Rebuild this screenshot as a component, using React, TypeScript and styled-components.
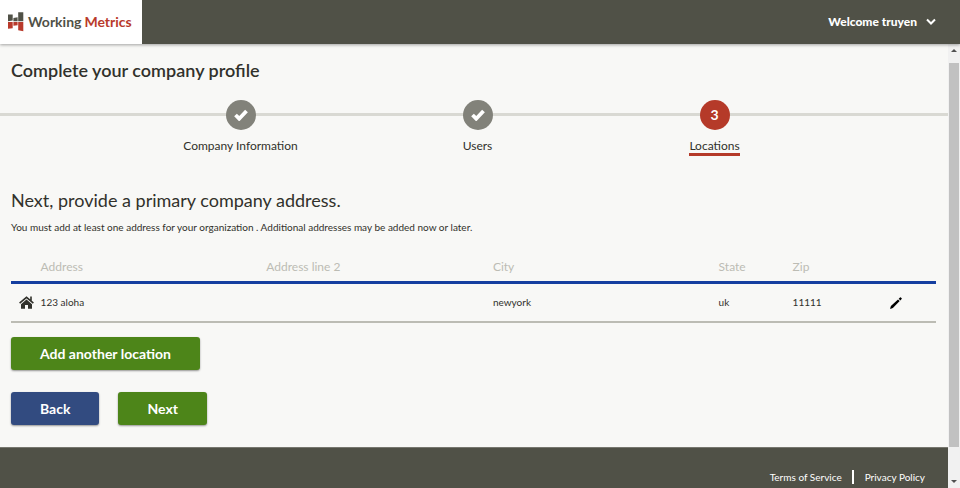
import React from "react";
import styled, { createGlobalStyle } from "styled-components";

const GlobalStyle = createGlobalStyle`
  *, *::before, *::after { box-sizing: border-box; }
  body {
    margin: 0;
    background: #f8f8f6;
    color: #31312b;
    font-family: Lato, "Open Sans", sans-serif;
    font-size: 12px;
    line-height: 16px;
  }
  h1, h2, p { margin: 0; }
`;

const Page = styled.div`
  display: flex;
  flex-direction: column;
  min-height: 100vh;
`;

const Header = styled.header`
  display: flex;
  justify-content: space-between;
  height: 44px;
  background: #505147;
  box-shadow: 0 1px 3px rgba(0, 0, 0, 0.35);
  z-index: 1;
`;

const Brand = styled.a`
  display: flex;
  align-items: center;
  gap: 4px;
  padding: 0 10px 0 8px;
  background: #fff;
  color: #505147;
  font-size: 14px;
  font-weight: 700;
  text-decoration: none;
`;

const BrandAccent = styled.span`
  margin-left: 3px;
  color: #b93a2b;
`;

const UserMenu = styled.button`
  display: flex;
  align-items: center;
  gap: 9px;
  padding: 0 24px 0 0;
  border: 0;
  background: none;
  color: #fff;
  font: 900 12px/16px Lato, sans-serif;
`;

const Body = styled.div`
  display: flex;
  flex: 1;
`;

const Column = styled.div`
  display: flex;
  flex: 1;
  flex-direction: column;
`;

const Main = styled.main`
  padding-bottom: 22px;
`;

const Title = styled.h1`
  padding: 14px 11px 18px;
  font-size: 18px;
  font-weight: 600;
  line-height: 24px;
`;

const Steps = styled.ol`
  display: grid;
  grid-template-columns: repeat(3, 1fr);
  margin: 0;
  padding: 0 115px 0 122px;
  list-style: none;
  background: linear-gradient(#d9d9d3, #d9d9d3) 0 13px / 100% 3px no-repeat;
`;

const Step = styled.li`
  display: flex;
  flex-direction: column;
  align-items: center;
  gap: 8px;
`;

const StepMark = styled.span<{ $current?: boolean }>`
  display: flex;
  align-items: center;
  justify-content: center;
  width: 30px;
  height: 30px;
  border-radius: 50%;
  background: ${(p) => (p.$current ? "#b53a29" : "#82827a")};
  color: #fff;
  font-size: 14px;
  font-weight: 700;
`;

const StepLabel = styled.span<{ $current?: boolean }>`
  border-bottom: 3px solid ${(p) => (p.$current ? "#b53a29" : "transparent")};
  font-size: 12px;
  line-height: 15px;
`;

const Section = styled.section`
  padding: 32px 12px 0 11px;
`;

const Lead = styled.h2`
  font-size: 18px;
  font-weight: 400;
  line-height: 24px;
`;

const Note = styled.p`
  padding-top: 7px;
  font-size: 10px;
`;

const Table = styled.table`
  width: 100%;
  margin-top: 18px;
  border-collapse: collapse;
  table-layout: fixed;
`;

const HeadCell = styled.th<{ $width: string }>`
  width: ${(p) => p.$width};
  height: 29px;
  padding: 0;
  border-bottom: 3px solid #153fa0;
  color: #bcbcb4;
  font-size: 12px;
  font-weight: 400;
  text-align: left;
`;

const Cell = styled.td`
  height: 40px;
  padding: 0;
  border-bottom: 2px solid #bcbcb4;
  font-size: 10px;
`;

const IconCell = styled(Cell)`
  padding-left: 8px;
`;

const Icon = styled.svg`
  display: block;
`;

const EditButton = styled.button`
  display: block;
  margin: 2px 0 0 23px;
  padding: 0;
  border: 0;
  background: none;
  color: #000;
`;

const Actions = styled.div`
  display: flex;
  gap: 19px;
  padding-top: 22px;
`;

const Button = styled.button<{ $tone?: "blue" | "green" }>`
  padding: 8px 29px;
  border: 0;
  border-radius: 3px;
  background: ${(p) => (p.$tone === "blue" ? "#324b80" : "#4d8519")};
  box-shadow: 0 1px 2px rgba(0, 0, 0, 0.4);
  color: #fff;
  font: 700 14px/17px Lato, sans-serif;
`;

const AddButton = styled(Button)`
  display: block;
  margin-top: 14px;
`;

const Footer = styled.footer`
  display: flex;
  flex: 1;
  justify-content: flex-end;
  align-items: flex-start;
  padding: 22px 23px 3px;
  background: #505147;
  border-top: 1px solid #77776f;
`;

const FooterLink = styled.a`
  color: #fff;
  font-size: 10px;
  line-height: 14px;
  text-decoration: none;

  & + & {
    margin-left: 10px;
    padding-left: 11px;
    border-left: 2px solid #fff;
  }
`;

const ScrollTrack = styled.div`
  display: flex;
  flex-direction: column;
  align-items: center;
  width: 12px;
  background: #f1f1f1;
`;

const ScrollThumb = styled.div`
  flex: 1;
  width: 10px;
  background: #c1c1c1;
`;

const ScrollArrow = styled.svg<{ $end?: boolean }>`
  margin: ${(p) => (p.$end ? "32px 0 4px" : "4px 0 10px")};
`;

const Logo = () => (
  <Icon width="16" height="20" viewBox="0 0 16 20" aria-hidden="true">
    <path fill="#505147" d="M0 2.500h4.700v6l-4.700 .7zM5.400 6l4.200-.7v3.900H5.400zM10.200 .3h5.100v8.900h-5.100z" />
    <path fill="#b93a2b" d="M0 9.900h4.700v6.300l-4.700 .5zM5.400 9.900h4.200v3.400l-4.200 .4zM10.200 9.900h5.100v9.400l-5.100-1z" />
  </Icon>
);

const Check = () => (
  <Icon width="14" height="12" viewBox="0 0 14 12" aria-hidden="true">
    <path d="M1.500 6l3.700 3.700L12.500 2" fill="none" stroke="#fff" strokeWidth="3.800" />
  </Icon>
);

const steps = [
  { label: "Company Information" },
  { label: "Users" },
  { label: "Locations", current: true },
];

const columns = [
  { label: "", width: "3.2%" },
  { label: "Address", width: "24.4%" },
  { label: "Address line 2", width: "24.5%" },
  { label: "City", width: "24.4%" },
  { label: "State", width: "8%" },
  { label: "Zip", width: "8%" },
  { label: "", width: "7.5%" },
];

export default function App() {
  return (
    <Page>
      <GlobalStyle />
      <Header>
        <Brand href="#">
          <Logo />
          <span>
            Working<BrandAccent>Metrics</BrandAccent>
          </span>
        </Brand>
        <UserMenu type="button">
          Welcome truyen
          <Icon width="10" height="8" viewBox="0 0 10 8" aria-hidden="true">
            <path d="M1 1.500l4 4 4-4" fill="none" stroke="#fff" strokeWidth="2" />
          </Icon>
        </UserMenu>
      </Header>
      <Body>
        <Column>
          <Main>
            <Title>Complete your company profile</Title>
            <Steps>
              {steps.map((step, i) => (
                <Step key={step.label} aria-current={step.current ? "step" : undefined}>
                  <StepMark $current={step.current}>{step.current ? i + 1 : <Check />}</StepMark>
                  <StepLabel $current={step.current}>{step.label}</StepLabel>
                </Step>
              ))}
            </Steps>
            <Section>
              <Lead>Next, provide a primary company address.</Lead>
              <Note>
                You must add at least one address for your organization . Additional addresses may be
                added now or later.
              </Note>
              <Table>
                <thead>
                  <tr>
                    {columns.map((c, i) => (
                      <HeadCell key={i} scope="col" $width={c.width}>
                        {c.label}
                      </HeadCell>
                    ))}
                  </tr>
                </thead>
                <tbody>
                  <tr>
                    <IconCell>
                      <Icon width="15" height="13" viewBox="0 0 15 13" aria-hidden="true">
                        <path fill="#31312b" d="M7.500 3.600L13 8.200v4.500H9V9H6v3.700H2V8.200z" />
                        <path
                          fill="none"
                          stroke="#31312b"
                          strokeWidth="1.600"
                          d="M.6 7.200L7.500 1.300l6.900 5.900M12 .6v4"
                        />
                      </Icon>
                    </IconCell>
                    <Cell>123 aloha</Cell>
                    <Cell />
                    <Cell>newyork</Cell>
                    <Cell>uk</Cell>
                    <Cell>11111</Cell>
                    <Cell>
                      <EditButton type="button" aria-label="Edit location">
                        <Icon width="12" height="12" viewBox="0 0 12 12" aria-hidden="true">
                          <path
                            fill="currentColor"
                            d="M0 12l.9-2.900L8 2.400 9.700 4.100 2.900 11.100zM8.700 1.700L10 .4Q10.400 0 10.900 .4L11.700 1.200Q12 1.700 11.600 2.100L10.400 3.400z"
                          />
                        </Icon>
                      </EditButton>
                    </Cell>
                  </tr>
                </tbody>
              </Table>
              <AddButton type="button">Add another location</AddButton>
              <Actions>
                <Button type="button" $tone="blue">
                  Back
                </Button>
                <Button type="button">Next</Button>
              </Actions>
            </Section>
          </Main>
          <Footer>
            <FooterLink href="#">Terms of Service</FooterLink>
            <FooterLink href="#">Privacy Policy</FooterLink>
          </Footer>
        </Column>
        <ScrollTrack aria-hidden="true">
          <ScrollArrow width="6" height="5" viewBox="0 0 6 5">
            <path d="M0 4l3-3 3 3z" fill="#505050" />
          </ScrollArrow>
          <ScrollThumb />
          <ScrollArrow $end width="6" height="5" viewBox="0 0 6 5">
            <path d="M0 1l3 3 3-3z" fill="#505050" />
          </ScrollArrow>
        </ScrollTrack>
      </Body>
    </Page>
  );
}
